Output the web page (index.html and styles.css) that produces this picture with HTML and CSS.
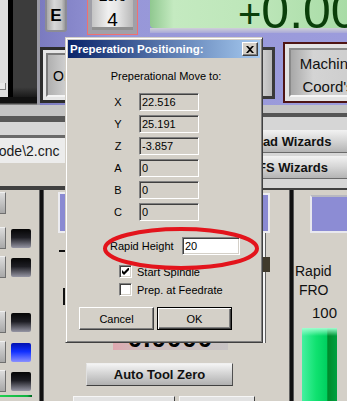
FILE: index.html
```html
<!DOCTYPE html>
<html>
<head>
<meta charset="utf-8">
<title>Preperation Positioning</title>
<link rel="stylesheet" href="styles.css">
</head>
<body>
<div class="screen">
  <!-- Mach3 screen behind the dialog (free canvas of controls) -->
  <div class="purple"></div>

  <div class="tl">
    <div class="tl-light"><span class="dd"></span></div>
    <div class="tl-black"></div>
    <div class="tl-dark"></div>
    <div class="tl-edge"></div>
    <div class="tl-bottom"></div>
  </div>

  <div class="btn-e">E</div>
  <div class="btn-zero"><div class="zero-face"><span class="zero-t">Zero</span><span class="zero-n">4</span></div></div>

  <div class="dro-top"><span class="dro-val"><span class="plus">+</span>0.0000</span></div>
  <div class="dro-under"></div>

  <div class="btn-off"><div class="off-face">OFFLINE</div></div>
  <div class="btn-hidden"></div>
  <div class="btn-machine"><div class="machine-face">Machine<br>Coord's</div></div>

  <div class="band-l">
    <div class="bl-1"></div>
    <div class="bl-2"></div>
    <div class="bl-3"></div>
    <div class="bl-4"></div>
    <div class="bl-path"><span class="path-text">C:\Mach3\GCode\2.cnc</span></div>
    <div class="bl-6"></div>
    <div class="bl-7"></div>
  </div>

  <div class="band-r">
    <div class="br-1"></div>
    <div class="br-2"></div>
    <div class="br-area">
      <div class="wiz wiz-1">Load Wizards</div>
      <div class="wiz wiz-2">LFS Wizards</div>
    </div>
    <div class="br-line"></div>
  </div>

  <!-- left lower panel -->
  <div class="vline vline-l"></div>
  <div class="sidebtn" style="top:192px"></div>
  <div class="sidebtn" style="top:227px"></div>
  <div class="sidebtn" style="top:256px"></div>
  <div class="sidebtn" style="top:311px"></div>
  <div class="sidebtn" style="top:341px"></div>
  <div class="sidebtn" style="top:370px"></div>
  <div class="led" style="top:229px"></div>
  <div class="led" style="top:258px"></div>
  <div class="led" style="top:313px"></div>
  <div class="led led-blue" style="top:343px"></div>
  <div class="led" style="top:372px"></div>
  <div class="blue-l"></div>
  <div class="dash-l"></div>
  <div class="tick-l"></div>
  <div class="green-l"></div>

  <!-- center lower -->
  <div class="dro-bottom"><span class="dro-b-val">0.0000</span></div>
  <div class="big-btn">Auto Tool Zero</div>
  <div class="low-btn low-btn-1"></div>
  <div class="low-btn low-btn-2"></div>

  <!-- right lower panel -->
  <div class="blue-r-part"></div>
  <div class="vline vline-r"></div>
  <div class="blue-r"></div>
  <div class="slider-r"></div>
  <div class="thumb-r"></div>
  <div class="fro-label">Rapid<br>&nbsp;FRO</div>
  <div class="fro-val">100</div>
  <div class="fro-bar"></div>

  <!-- the dialog -->
  <div class="dialog">
    <div class="titlebar">
      <span class="title">Preperation Positioning:</span>
      <span class="close"><svg width="8" height="7" viewBox="0 0 8 7"><path d="M0 0 L2 0 L4 2 L6 0 L8 0 L5 3.5 L8 7 L6 7 L4 5 L2 7 L0 7 L3 3.5 Z" fill="#000"/></svg></span>
    </div>
    <div class="dbody">
      <div class="intro">Preperational Move to:</div>
      <div class="axes">
        <div class="axis"><span class="alabel">X</span><span class="field">22.516</span></div>
        <div class="axis"><span class="alabel">Y</span><span class="field">25.191</span></div>
        <div class="axis"><span class="alabel">Z</span><span class="field">-3.857</span></div>
        <div class="axis"><span class="alabel">A</span><span class="field">0</span></div>
        <div class="axis"><span class="alabel">B</span><span class="field">0</span></div>
        <div class="axis"><span class="alabel">C</span><span class="field">0</span></div>
      </div>
      <div class="rapid"><span>Rapid Height</span><span class="input">20</span></div>
      <div class="check check-1"><span class="box"><svg width="7" height="7" viewBox="0 0 7 7"><path d="M0 2 L0 5 L2 7 L7 2 L7 -1 L2 4 Z" fill="#000"/></svg></span><span>Start Spindle</span></div>
      <div class="check check-2"><span class="box"></span><span>Prep. at Feedrate</span></div>
      <div class="buttons">
        <button class="btn">Cancel</button>
        <button class="btn btn-default">OK</button>
      </div>
    </div>
  </div>

  <svg class="annot" width="347" height="401" viewBox="0 0 347 401">
    <ellipse cx="181" cy="248.5" rx="76" ry="19.5" fill="none" stroke="#e3141c" stroke-width="4"/>
  </svg>
</div>
</body>
</html>
```

FILE: styles.css
```css
html, body {
  margin: 0;
  padding: 0;
  background: #d4d0c8;
}

.screen {
  position: relative;
  width: 347px;
  height: 401px;
  overflow: hidden;
  background: #d4d0c8;
  font-family: "Liberation Sans", Arial, sans-serif;
  color: #000;
}

/* ---------- top area ---------- */
.purple {
  position: absolute;
  left: 38px;
  top: 0;
  width: 309px;
  height: 105px;
  background: linear-gradient(to right, #7a7abf, #9797d8 25%, #9c9cdc);
}

.tl {
  position: absolute;
  left: 0;
  top: 0;
  width: 40px;
  height: 105px;
  display: grid;
  grid-template-columns: 8px 5px 24px 3px;
  grid-template-rows: 97px 8px;
}
.tl-light {
  background: #dedede;
  position: relative;
}
.dd {
  display: block;
  width: 6px;
  height: 7px;
  margin-top: 83px;
  box-sizing: border-box;
  background: #e8e8e8;
  border-right: 1px solid #808080;
  border-bottom: 1px solid #808080;
}
.tl-black { background: #000; }
.tl-dark { background: linear-gradient(#3c3c3c 90%, #1a1a1a); }
.tl-edge { grid-row: 1 / 3; grid-column: 4; background: #9a9aa4; }
.tl-bottom { grid-row: 2; grid-column: 1 / 4; background: linear-gradient(#111 70%, #9a9a9a); }

.btn-e {
  position: absolute;
  left: 45px;
  top: -4px;
  width: 22px;
  height: 36px;
  box-sizing: border-box;
  border: 2px solid #8c8c94;
  border-radius: 3px;
  background: linear-gradient(to right, #a8a8a8, #d8d8d8 40%, #c4c4c4 80%, #9a9a9a);
  font-weight: bold;
  font-size: 17px;
  display: flex;
  align-items: center;
  justify-content: center;
  padding-top: 3px;
}

.btn-zero {
  position: absolute;
  left: 87px;
  top: -10px;
  width: 51px;
  height: 45px;
  box-sizing: border-box;
  border: 1px solid #f07070;
  background: #a0a0a8;
  padding: 2px 4px 4px 4px;
}
.zero-face {
  height: 100%;
  box-sizing: border-box;
  background: linear-gradient(to right, #c4c4c4, #f0f0f0 40%, #e8e8e8 60%, #b8b8b8);
  border-bottom: 3px solid #909090;
  display: flex;
  flex-direction: column;
  align-items: center;
}
.zero-t {
  font-size: 13px;
  line-height: 14px;
  margin-top: -3px;
}
.zero-n {
  font-size: 19px;
  line-height: 20px;
  margin-top: 6px;
}

.dro-top {
  position: absolute;
  left: 150px;
  top: 0;
  width: 197px;
  height: 28px;
  overflow: hidden;
  background: linear-gradient(to right, #90c890, #c4eac0 12%, #bde6b9 55%, #a8dca6);
  border-radius: 0 0 0 4px;
}
.dro-val {
  display: block;
  padding-left: 88px;
  margin-top: -12px;
  font-size: 50px;
  line-height: 46px;
  color: #0a3f0a;
  white-space: nowrap;
}
.plus {
  font-size: 40px;
}
.dro-under {
  position: absolute;
  left: 150px;
  top: 28px;
  width: 197px;
  height: 5px;
  background: linear-gradient(#d0d0d8, #a8a8d8);
}

.btn-off {
  position: absolute;
  left: 40px;
  top: 47px;
  width: 60px;
  height: 56px;
  box-sizing: border-box;
  border: 3px solid #2c2c2c;
  background: #e6e6e6;
  padding: 3px;
}
.off-face {
  height: 100%;
  box-sizing: border-box;
  border: 2px solid;
  border-color: #7a7a7a #f4f4f4 #f4f4f4 #7a7a7a;
  background: linear-gradient(to right, #b0b0b0, #d6d6d6 50%, #c0c0c0);
  font-size: 14px;
  display: flex;
  align-items: center;
  padding-left: 5px;
  padding-top: 2px;
}

.btn-hidden {
  position: absolute;
  left: 200px;
  top: 47px;
  width: 75px;
  height: 52px;
  box-sizing: border-box;
  border: 3px solid #3a3a3a;
  background: linear-gradient(to left, #b8b8b8, #f2f2f2 35%, #e6e6e6);
}

.btn-machine {
  position: absolute;
  left: 283px;
  top: 42px;
  width: 90px;
  height: 61px;
  box-sizing: border-box;
  border: 2px solid #4e1414;
  background: #e4e4e4;
  padding: 4px;
}
.machine-face {
  height: 100%;
  box-sizing: border-box;
  border: 2px solid;
  border-color: #8a8a8a #f6f6f6 #f6f6f6 #8a8a8a;
  background: linear-gradient(to right, #a8a8a8, #d4d4d4 30%, #cfcfcf 70%);
  font-size: 15px;
  line-height: 23px;
  text-align: center;
  padding-top: 2px;
  color: #111;
}

/* horizontal bands */
.band-l {
  position: absolute;
  left: 0;
  top: 105px;
  width: 66px;
  display: flex;
  flex-direction: column;
}
.bl-1 { height: 11px; background: #c4c4c4; }
.bl-2 { height: 6px; background: #585858; }
.bl-3 { height: 13px; background: #d6d6d6; }
.bl-4 { height: 3px; background: #6a6a6a; }
.bl-path {
  height: 25px;
  background: #ececec;
  display: flex;
  align-items: center;
  overflow: hidden;
  white-space: nowrap;
}
.path-text {
  font-size: 14px;
  margin-left: -86px;
  color: #1a1a1a;
}
.bl-6 { height: 23px; background: #d4d0c8; }
.bl-7 { height: 4px; background: #404040; }

.band-r {
  position: absolute;
  left: 200px;
  top: 105px;
  width: 147px;
  display: flex;
  flex-direction: column;
}
.br-1 { height: 8px; background: #c4c4c4; }
.br-2 { height: 4px; background: #555; }
.br-area {
  height: 71px;
  background: #d6d6d6;
  display: flex;
  flex-direction: column;
  gap: 3px;
  padding-top: 13px;
  box-sizing: border-box;
  overflow: hidden;
}
.wiz {
  height: 23px;
  margin-left: 5px;
  width: 180px;
  box-sizing: border-box;
  background: linear-gradient(#f2f2f2, #d8d8d8 45%, #b4b4b4);
  border-bottom: 1px solid #6a6a6a;
  font-weight: bold;
  font-size: 13px;
  display: flex;
  align-items: center;
  white-space: nowrap;
  color: #111;
}
.wiz-1 { padding-left: 42px; }
.wiz-2 { padding-left: 45px; }
.br-line { height: 2px; background: #404040; }

/* lower panels */
.vline {
  position: absolute;
  top: 190px;
  width: 5px;
  height: 211px;
  background: linear-gradient(to right, #8a8a8a, #111 30%, #111 70%, #7a7a7a);
}
.vline-l { left: 39px; }
.vline-r { left: 289px; }

.sidebtn {
  position: absolute;
  left: -14px;
  width: 20px;
  height: 22px;
  box-sizing: border-box;
  border: 1px solid #f0f0f0;
  border-right-color: #707070;
  border-bottom-color: #707070;
  background: linear-gradient(#dcdcdc, #a8a8a8);
}
.led {
  position: absolute;
  left: 11px;
  width: 20px;
  height: 19px;
  background: linear-gradient(#050505, #1e1e24 45%, #9696a4);
  border-radius: 2px;
}
.led-blue {
  background: linear-gradient(#0010b0, #1030ff 45%, #8a90ff);
}
.blue-l {
  position: absolute;
  left: 58px;
  top: 192px;
  width: 12px;
  height: 41px;
  box-sizing: border-box;
  border: 2px solid #ececf0;
  background: #8a8ad2;
}
.dash-l {
  position: absolute;
  left: 59px;
  top: 250px;
  width: 6px;
  height: 2px;
  background: #111;
}
.tick-l {
  position: absolute;
  left: 63px;
  top: 288px;
  width: 2px;
  height: 17px;
  background: #111;
}
.green-l {
  position: absolute;
  left: 0;
  top: 395px;
  width: 32px;
  height: 2px;
  background: linear-gradient(to right, #20d050, #10b040 85%, #006020);
}

.dro-bottom {
  position: absolute;
  left: 113px;
  top: 343px;
  width: 115px;
  height: 7px;
  overflow: hidden;
  background: linear-gradient(to right, #e0a8b0, #cdbcbc 25%, #c8c4c4);
  text-align: center;
}
.dro-b-val {
  display: block;
  font-size: 26px;
  font-weight: bold;
  line-height: 7px;
  height: 7px;
  margin-top: -8px;
  letter-spacing: 1px;
  color: #000;
}

.big-btn {
  position: absolute;
  left: 86px;
  top: 363px;
  width: 147px;
  height: 23px;
  box-sizing: border-box;
  border: 1px solid;
  border-color: #f0f0f0 #505050 #404040 #e0e0e0;
  background: linear-gradient(#f4f4f4, #d8d8d8 40%, #b0b0b0);
  font-size: 13px;
  font-weight: bold;
  display: flex;
  align-items: center;
  justify-content: center;
  color: #111;
}
.low-btn {
  position: absolute;
  top: 396px;
  height: 10px;
  box-sizing: border-box;
  border: 1px solid;
  border-color: #f6f6f6 #404040 #404040 #f6f6f6;
  background: #e2e2e2;
}
.low-btn-1 { left: 73px; width: 102px; }
.low-btn-2 { left: 179px; width: 76px; }

.blue-r-part {
  position: absolute;
  left: 256px;
  top: 193px;
  width: 14px;
  height: 40px;
  box-sizing: border-box;
  border: 2px solid #ececf0;
  background: #8a8ad2;
}
.blue-r {
  position: absolute;
  left: 310px;
  top: 195px;
  width: 45px;
  height: 38px;
  box-sizing: border-box;
  border: 2px solid #e8e8ee;
  border-top-color: #b8b8c0;
  background: #8c8cd4;
}
.slider-r {
  position: absolute;
  left: 263px;
  top: 233px;
  width: 2px;
  height: 110px;
  background: #f4f4f4;
  border-right: 1px solid #606060;
}
.thumb-r {
  position: absolute;
  left: 263px;
  top: 257px;
  width: 7px;
  height: 15px;
  background: #403a2c;
}
.fro-label {
  position: absolute;
  left: 295px;
  top: 262px;
  font-size: 14px;
  line-height: 19px;
  color: #111;
}
.fro-val {
  position: absolute;
  left: 312px;
  top: 305px;
  font-size: 15px;
  line-height: 16px;
  color: #111;
}
.fro-bar {
  position: absolute;
  left: 302px;
  top: 328px;
  width: 35px;
  height: 80px;
  background:
    linear-gradient(#a0ffd0, rgba(160,255,208,0) 8px),
    linear-gradient(to right, #44f0a0, #10e270 40%, #00d060 70%, #008a2c 74%, #00a040);
}

/* ---------- dialog ---------- */
.dialog {
  position: absolute;
  left: 65px;
  top: 37px;
  width: 198px;
  height: 306px;
  box-sizing: border-box;
  background: #d4d0c8;
  border: 1px solid;
  border-color: #d4d0c8 #404040 #404040 #d4d0c8;
  box-shadow: inset 1px 1px #fff, inset -1px -1px #808080;
  padding: 2px;
  font-size: 11px;
  font-family: "Liberation Sans", Arial, sans-serif;
  display: flex;
  flex-direction: column;
}
.titlebar {
  height: 18px;
  flex: none;
  background: linear-gradient(to right, #0a246a, #a6caf0);
  display: flex;
  align-items: center;
  justify-content: space-between;
  padding: 0 2px;
}
.title {
  color: #fff;
  font-weight: bold;
  font-size: 11.5px;
}
.close {
  width: 16px;
  height: 14px;
  box-sizing: border-box;
  background: #d4d0c8;
  border: 1px solid;
  border-color: #fff #404040 #404040 #fff;
  box-shadow: inset -1px -1px #808080;
  display: flex;
  align-items: center;
  justify-content: center;
}
.close svg { display: block; }

.dbody {
  display: flex;
  flex-direction: column;
  padding-top: 12px;
}
.intro {
  text-align: center;
  line-height: 13px;
  padding-left: 4px;
}
.axes {
  margin: 10px 0 0 38px;
  display: flex;
  flex-direction: column;
  gap: 4px;
}
.axis {
  display: flex;
  align-items: center;
  gap: 9px;
  height: 18px;
}
.alabel {
  width: 24px;
  text-align: center;
}
.field, .input {
  width: 60px;
  height: 18px;
  box-sizing: border-box;
  border: 1px solid;
  border-color: #808080 #fff #fff #808080;
  box-shadow: inset 1px 1px #404040, inset -1px -1px #d4d0c8;
  padding: 0 2px;
  line-height: 16px;
  background: #d4d0c8;
}
.rapid {
  margin: 16px 0 0 42px;
  display: grid;
  grid-template-columns: 72px 58px;
  align-items: center;
  height: 18px;
}
.input {
  width: 58px;
  background: #fff;
}
.check {
  margin-left: 51px;
  display: flex;
  align-items: center;
  gap: 5px;
  height: 13px;
}
.check-1 { margin-top: 10px; }
.check-2 { margin-top: 5px; }
.box {
  width: 13px;
  height: 13px;
  box-sizing: border-box;
  background: #fff;
  border: 1px solid;
  border-color: #808080 #fff #fff #808080;
  box-shadow: inset 1px 1px #404040, inset -1px -1px #d4d0c8;
  display: flex;
  align-items: center;
  justify-content: center;
}
.box svg { display: block; }
.buttons {
  margin: 11px 0 0 11px;
  display: flex;
  gap: 3px;
}
.btn {
  width: 75px;
  height: 23px;
  box-sizing: border-box;
  padding: 0;
  font: inherit;
  color: #000;
  background: #d4d0c8;
  border: 1px solid;
  border-color: #fff #404040 #404040 #fff;
  box-shadow: inset -1px -1px #808080;
}
.btn-default {
  border: 1px solid #000;
  box-shadow: inset 1px 1px #fff, inset -1px -1px #404040, inset -2px -2px #808080;
}

.annot {
  position: absolute;
  left: 0;
  top: 0;
  pointer-events: none;
}
```
